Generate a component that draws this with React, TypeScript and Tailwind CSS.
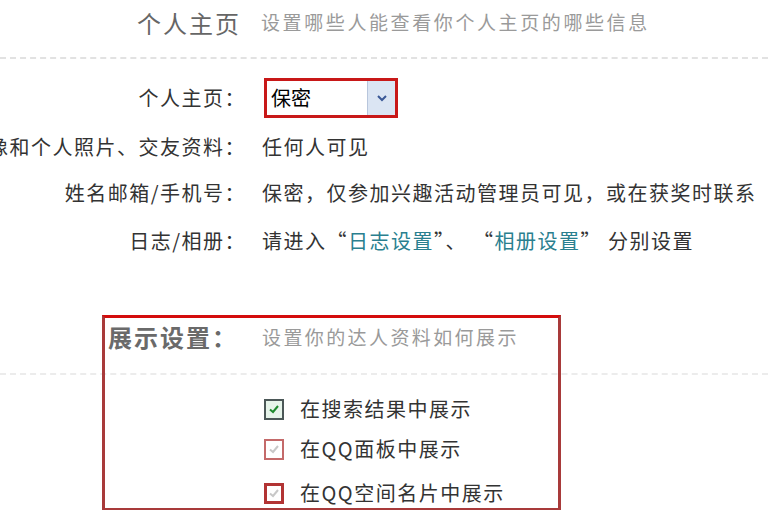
import React from 'react';

const font = { fontFamily: '"Noto Sans CJK SC", "Noto Sans", sans-serif' };

const rows = [
  { label: '头像和个人照片、交友资料：', value: <span>任何人可见</span> },
  { label: '姓名邮箱/手机号：', value: <span>保密，仅参加兴趣活动管理员可见，或在获奖时联系</span> },
  {
    label: '日志/相册：',
    value: (
      <span>
        请进入“<span className="text-[#2a7f8f]">日志设置</span>”、 “<span className="text-[#2a7f8f]">相册设置</span>” 分别设置
      </span>
    ),
  },
];

const Check = ({ color }: { color: string }) => (
  <svg viewBox="0 0 12 12" className="w-[12px] h-[12px]">
    <path d="M2 6.5 L5 9 L10 3" fill="none" stroke={color} strokeWidth="2" />
  </svg>
);

const options = [
  { text: '在搜索结果中展示', box: 'border-2 border-[#4b5757] bg-[#e6f4ea]', check: '#1e8a2e', mt: 'mt-[21px]' },
  { text: '在QQ面板中展示', box: 'border-2 border-[#c46a6a] bg-white', check: '#c8c8c8', mt: 'mt-[14px]' },
  { text: '在QQ空间名片中展示', box: 'border-[3px] border-[#b23434] bg-white', check: '#c8c8c8', mt: 'mt-[18px]' },
];

export default function App() {
  return (
    <div className="relative w-[768px] h-[510px] overflow-hidden bg-white text-[#333]" style={font}>
      {/* header */}
      <div className="flex items-center h-[45px] pl-[137px] gap-[20px]">
        <span className="text-[24px] tracking-[2px] text-[#666]">个人主页</span>
        <span className="text-[19px] tracking-[2.6px] text-[#9a9a9a]">设置哪些人能查看你个人主页的哪些信息</span>
      </div>
      <div className="mt-[12px] border-t-2 border-dashed border-[#e2e2e2]" />

      {/* row 1 with select */}
      <div className="flex items-center mt-[19px] h-[40px]">
        <div className="w-[246px] flex justify-end text-[20px] tracking-[1.5px] whitespace-nowrap">个人主页：</div>
        <div className="ml-[18px] w-[134px] h-[40px] border-[3px] border-[#c81818] flex items-stretch">
          <div className="flex-1 flex items-center pl-[4px] text-[20px] text-black bg-white">保密</div>
          <div className="w-[28px] bg-[#dbe5f3] border-l border-[#b8c6dc] flex items-center justify-center">
            <svg viewBox="0 0 10 8" className="w-[10px] h-[8px]">
              <path d="M1 2 L5 6 L9 2" fill="none" stroke="#3a5896" strokeWidth="2" />
            </svg>
          </div>
        </div>
      </div>

      {rows.map((r, i) => (
        <div key={i} className={`flex items-center h-[30px] ${i === 0 ? 'mt-[14px]' : i === 1 ? 'mt-[16px]' : 'mt-[18px]'}`}>
          <div className="w-[246px] shrink-0 flex justify-end overflow-hidden text-[20px] tracking-[1.5px] whitespace-nowrap">
            {r.label}
          </div>
          <div className="ml-[16px] text-[20px] tracking-[1.5px] whitespace-nowrap">{r.value}</div>
        </div>
      ))}

      {/* display settings */}
      <div className="flex items-center mt-[66px] h-[30px]">
        <div className="w-[246px] pl-[108px] text-[24px] tracking-[2px] text-[#6a6a6a] font-bold whitespace-nowrap">展示设置：</div>
        <div className="ml-[16px] text-[19px] tracking-[2.4px] text-[#9a9a9a] whitespace-nowrap">设置你的达人资料如何展示</div>
      </div>
      <div className="mt-[21px] border-t-2 border-dashed border-[#ececec]" />

      {options.map((o, i) => (
        <div key={i} className={`flex items-center h-[26px] pl-[264px] ${o.mt}`}>
          <div className={`w-[20px] h-[21px] ${o.box} flex items-center justify-center`}>
            <Check color={o.check} />
          </div>
          <span className="ml-[16px] text-[20px] tracking-[1.5px] whitespace-nowrap">{o.text}</span>
        </div>
      ))}

      {/* red annotation frame */}
      <div className="absolute left-[102px] top-[315px] w-[459px] h-[196px] border-[3px] border-[#a83a3a] border-t-[#d40c0c]" />
    </div>
  );
}
